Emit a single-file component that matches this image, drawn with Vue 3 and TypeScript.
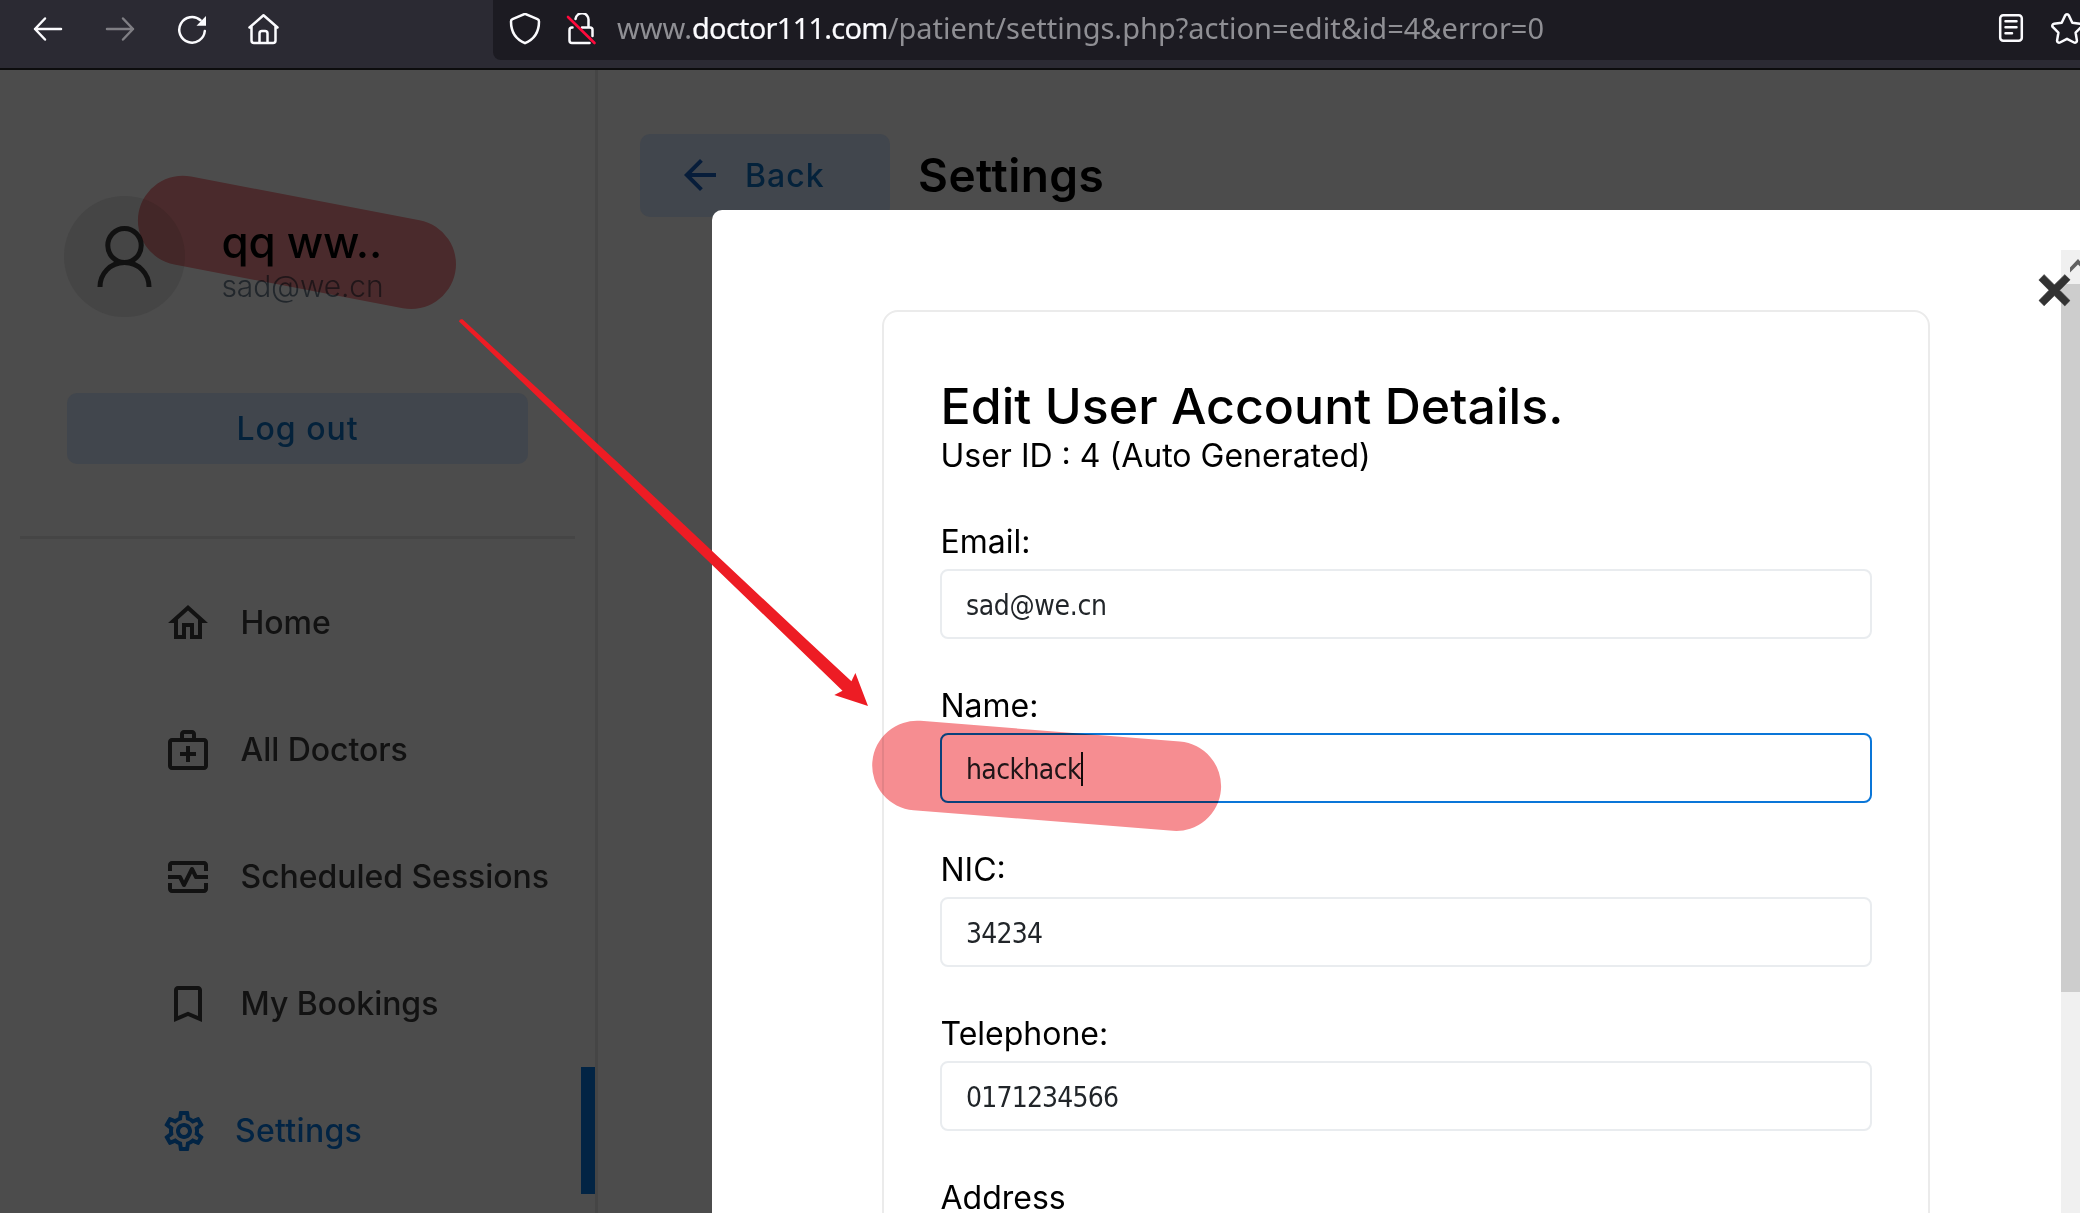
<script setup lang="ts">
interface MenuItem {
  label: string
  icon: string
  active?: boolean
}

interface Field {
  label: string
  value: string
  kind?: 'email' | 'name' | 'number'
  focused?: boolean
}

const menu: MenuItem[] = [
  {
    label: 'Home',
    icon: 'M12 5.69l5 4.5V18h-2v-6H9v6H7v-7.81l5-4.5M12 3L2 12h3v8h6v-6h2v6h6v-8h3L12 3z',
  },
  {
    label: 'All Doctors',
    icon: 'M20 6h-4V4c0-1.1-.9-2-2-2h-4c-1.1 0-2 .9-2 2v2H4c-1.1 0-2 .9-2 2v12c0 1.1.9 2 2 2h16c1.1 0 2-.9 2-2V8c0-1.1-.9-2-2-2zM10 4h4v2h-4V4zm10 16H4V8h16v12zM11 10h2v3h3v2h-3v3h-2v-3H8v-2h3z',
  },
  {
    label: 'Scheduled Sessions',
    icon: 'M20 4H4c-1.1 0-2 .9-2 2v3h2V6h16v3h2V6c0-1.1-.9-2-2-2zM20 18H4v-3H2v3c0 1.1.9 2 2 2h16c1.1 0 2-.9 2-2v-3h-2v3zM14.89 7.55c-.34-.68-1.45-.68-1.79 0L10 13.76l-1.11-2.21C8.72 11.21 8.38 11 8 11H2v2h5.38l1.72 3.45c.18.34.52.55.9.55s.72-.21.89-.55L14 10.24l1.11 2.21c.17.34.51.55.89.55h6v-2h-5.38l-1.73-3.45z',
  },
  {
    label: 'My Bookings',
    icon: 'M17 3H7c-1.1 0-2 .9-2 2v16l7-3 7 3V5c0-1.1-.9-2-2-2zm0 15l-5-2.18L7 18V5h10v13z',
  },
  {
    label: 'Settings',
    active: true,
    icon: 'M19.43 12.98c.04-.32.07-.64.07-.98 0-.34-.03-.66-.07-.98l2.11-1.65c.19-.15.24-.42.12-.64l-2-3.46c-.09-.16-.26-.25-.44-.25-.06 0-.12.01-.17.03l-2.49 1c-.52-.4-1.08-.73-1.69-.98l-.38-2.65C14.46 2.18 14.25 2 14 2h-4c-.25 0-.46.18-.49.42l-.38 2.65c-.61.25-1.17.59-1.69.98l-2.49-1c-.06-.02-.12-.03-.18-.03-.17 0-.34.09-.43.25l-2 3.46c-.13.22-.07.49.12.64l2.11 1.65c-.04.32-.07.65-.07.98 0 .33.03.66.07.98l-2.11 1.65c-.19.15-.24.42-.12.64l2 3.46c.09.16.26.25.44.25.06 0 .12-.01.17-.03l2.49-1c.52.4 1.08.73 1.69.98l.38 2.65c.03.24.24.42.49.42h4c.25 0 .46-.18.49-.42l.38-2.65c.61-.25 1.17-.59 1.69-.98l2.49 1c.06.02.12.03.18.03.17 0 .34-.09.43-.25l2-3.46c.12-.22.07-.49-.12-.64l-2.11-1.65zm-1.98-1.71c.04.31.05.52.05.73 0 .21-.02.43-.05.73l-.14 1.13.89.7 1.08.84-.7 1.21-1.27-.51-1.04-.42-.9.68c-.43.32-.84.56-1.25.73l-1.06.43-.16 1.13-.2 1.35h-1.4l-.19-1.35-.16-1.13-1.06-.43c-.43-.18-.83-.41-1.23-.71l-.91-.7-1.06.43-1.27.51-.7-1.21 1.08-.84.89-.7-.14-1.13c-.03-.31-.05-.54-.05-.74s.02-.43.05-.73l.14-1.13-.89-.7-1.08-.84.7-1.21 1.27.51 1.04.42.9-.68c.43-.32.84-.56 1.25-.73l1.06-.43.16-1.13.2-1.35h1.39l.19 1.35.16 1.13 1.06.43c.43.18.83.41 1.23.71l.91.7 1.06-.43 1.27-.51.7 1.21-1.07.85-.89.7.14 1.13zM12 8c-2.21 0-4 1.79-4 4s1.79 4 4 4 4-1.79 4-4-1.79-4-4-4zm0 6c-1.1 0-2-.9-2-2s.9-2 2-2 2 .9 2 2-.9 2-2 2z',
  },
]

const fields: Field[] = [
  { label: 'Email:', value: 'sad@we.cn', kind: 'email' },
  { label: 'Name:', value: 'hackhack', kind: 'name', focused: true },
  { label: 'NIC:', value: '34234', kind: 'number' },
  { label: 'Telephone:', value: '0171234566', kind: 'number' },
  { label: 'Address', value: '' },
]
</script>

<template>
  <div class="window">
    <header class="toolbar">
      <nav class="nav-buttons">
        <svg class="tool-icon" viewBox="0 0 32 32"><path d="M29 16H3M13 5.500L3 16l10 10.500" /></svg>
        <svg class="tool-icon dim" viewBox="0 0 32 32"><path d="M3 16h26M19 5.500L29 16 19 26.500" /></svg>
        <svg class="tool-icon" viewBox="0 0 32 32">
          <path d="M28.800 18A12.800 12.800 0 1 1 24.500 7.200" />
          <path class="solid" d="M30 3v9.800h-9.500z" />
        </svg>
        <svg class="tool-icon" viewBox="0 0 32 32">
          <path d="M1.500 14.500L15.500 2.200l14 12.300M3.500 13v14.500a2.500 2.500 0 0 0 2.500 2.500h19a2.500 2.500 0 0 0 2.500-2.500V13M11.500 30V20.500a2.500 2.500 0 0 1 2.500-2.500h3a2.500 2.500 0 0 1 2.500 2.500V30" />
        </svg>
      </nav>
      <div class="address-bar">
        <svg class="tool-icon" viewBox="0 0 32 32">
          <path d="M16 .800L28.500 6.200a2.500 2.500 0 0 1 1.500 2.400C30 19 25 26.500 16 30.200 7 26.500 2 19 2 8.600a2.500 2.500 0 0 1 1.500-2.400z" />
        </svg>
        <svg class="tool-icon lock" viewBox="0 0 32 32">
          <path d="M10.500 6a6.500 6.500 0 0 1 13 1.500V14M7.500 14.500H7a2.500 2.500 0 0 0-2.500 2.500v10.500A2.500 2.500 0 0 0 7 30h17.500M17 14.500h8a2.500 2.500 0 0 1 2.500 2.500v6" />
          <path class="slash" d="M3 4L29.500 30" />
        </svg>
        <span class="url"><span class="url-sub">www.</span><span class="url-domain">doctor111.com</span><span class="url-path">/patient/settings.php?action=edit&amp;id=4&amp;error=0</span></span>
        <svg class="tool-icon reader" viewBox="0 0 32 32">
          <rect x="5.200" y="2.200" width="21.600" height="25.600" rx="3" />
          <path d="M10.500 8.200h11M10.500 14.200h11M10.500 20.200h6.500" />
        </svg>
        <svg class="tool-icon" viewBox="0 0 32 32">
          <path d="M14.200 2.400a2 2 0 0 1 3.600 0l3.500 7.300 7.700 1.100a2 2 0 0 1 1.100 3.400l-5.500 5.500 1.300 7.700a2 2 0 0 1-2.900 2.100L16 25.800l-7 3.700a2 2 0 0 1-2.900-2.100l1.300-7.700-5.500-5.500A2 2 0 0 1 3 10.800l7.700-1.100z" />
        </svg>
      </div>
    </header>

    <div class="page">
      <aside class="sidebar">
        <div class="profile">
          <div class="avatar">
            <svg viewBox="0 0 121 121">
              <ellipse cx="60.500" cy="49.500" rx="16.700" ry="17" />
              <path d="M36 91C36 78 46 66.500 60.500 66.500S85 78 85 91" />
            </svg>
          </div>
          <div class="identity">
            <div class="user-name">qq ww..</div>
            <div class="user-email">sad@we.cn</div>
          </div>
        </div>
        <button class="logout">Log out</button>
        <div class="divider"></div>
        <ul class="menu">
          <li v-for="item in menu" :key="item.label" :class="['menu-item', { active: item.active }]">
            <svg viewBox="0 0 24 24"><path :d="item.icon" fill-rule="evenodd" /></svg>
            <span>{{ item.label }}</span>
          </li>
        </ul>
      </aside>
      <main class="content">
        <button class="back">
          <svg viewBox="0 0 24 24"><path d="M20 11H7.830l5.590-5.590L12 4l-8 8 8 8 1.410-1.410L7.830 13H20v-2z" /></svg>
          <span>Back</span>
        </button>
        <h1>Settings</h1>
      </main>
    </div>

    <section class="modal">
      <div class="card">
        <h2>Edit User Account Details.</h2>
        <p class="user-id">User ID : 4 (Auto Generated)</p>
        <form>
          <div v-for="field in fields" :key="field.label" class="field">
            <label>{{ field.label }}</label>
            <div :class="['input', field.kind, { focused: field.focused }]">
              <span>{{ field.value }}</span><i v-if="field.focused" class="caret"></i>
            </div>
          </div>
        </form>
      </div>
      <div class="scrollbar">
        <div class="scroll-up">
          <svg viewBox="0 0 34 34"><path d="M9 22.500v-5l8-8.500 8 8.500v5l-8-8z" /></svg>
        </div>
        <div class="thumb"></div>
      </div>
      <span class="close">×</span>
    </section>

    <svg class="markup highlight" viewBox="0 0 2080 1213">
      <path d="M182.700 220.500L411.200 264.200M917 765.500L1176.300 786.200" />
    </svg>
    <svg class="markup" viewBox="0 0 2080 1213">
      <path class="arrow" d="M459 321.500Q459.500 318.500 462.500 319.300L620 464.500 807 640 851.400 681.300 855.400 673 868 706 834.300 695 842.500 690.700 790 640 620 476z" />
    </svg>
  </div>
</template>

<style>
body {
  margin: 0;
  background: #4c4c4c;
  overflow: hidden;
}
</style>

<style scoped>
.window {
  position: relative;
  width: 2080px;
  height: 1213px;
  overflow: hidden;
  background: #4c4c4c;
  font-family: Inter, sans-serif;
  isolation: isolate;
}

.toolbar {
  display: flex;
  box-sizing: border-box;
  height: 70px;
  background: #2b2a33;
  border-bottom: 2px solid #0c0c0d;
}

.nav-buttons {
  display: flex;
  gap: 40px;
  box-sizing: border-box;
  width: 493px;
  padding: 13px 0 0 32px;
}

.tool-icon {
  flex: none;
  width: 32px;
  height: 32px;
  fill: none;
  stroke: #fbfbfe;
  stroke-width: 2.5;
  stroke-linecap: round;
  stroke-linejoin: round;
}

.tool-icon.dim {
  stroke: #7f7e84;
}

.tool-icon .solid {
  fill: #fbfbfe;
  stroke: none;
}

.tool-icon .slash {
  stroke: #ff0a3c;
  stroke-width: 2.6;
}

.address-bar {
  display: flex;
  flex: 1;
  box-sizing: border-box;
  height: 60px;
  min-width: 0;
  padding: 13px 0 0 16px;
  background: #1c1b22;
  border-radius: 0 0 0 8px;
}

.lock {
  margin-left: 24px;
}

.url {
  flex: none;
  width: 1378px;
  margin: -5px 0 0 20px;
  font: 29px/40px "Noto Sans", sans-serif;
  color: #8f8f94;
  white-space: nowrap;
}

.url-domain {
  color: #fbfbfe;
  letter-spacing: -0.75px;
  -webkit-text-stroke: 0.2px #fbfbfe;
}

.reader {
  margin-right: 24px;
}

.page {
  display: flex;
  height: 1143px;
}

.sidebar {
  flex: none;
  box-sizing: border-box;
  width: 598px;
  border-right: 3px solid #454545;
}

.profile {
  display: flex;
  height: 121px;
  padding: 126px 0 0 64px;
}

.avatar {
  width: 121px;
  height: 121px;
  border-radius: 50%;
  background: #454545;
}

.avatar svg {
  display: block;
  fill: none;
  stroke: #111;
  stroke-width: 5;
}

.identity {
  padding: 20px 0 0 36.500px;
}

.user-name {
  font-size: 44px;
  font-weight: 500;
  line-height: 52px;
  letter-spacing: -0.3px;
  color: #000;
}

.user-email {
  font-size: 30px;
  font-weight: 300;
  line-height: 36px;
  letter-spacing: -0.15px;
  color: #22272c;
}

button {
  border: 0;
  padding: 0;
  border-radius: 10px;
  background: #41464d;
  color: #04223b;
  font: 500 32px/40px Inter, sans-serif;
  letter-spacing: 1px;
}

.logout {
  display: block;
  width: 461px;
  height: 71px;
  margin: 76px 0 0 67px;
}

.divider {
  width: 555px;
  height: 3px;
  margin: 72px 0 20px 20px;
  background: #454545;
}

.menu {
  margin: 0;
  padding: 0;
  list-style: none;
}

.menu-item {
  display: flex;
  align-items: center;
  box-sizing: border-box;
  height: 127px;
  padding-left: 164px;
  font-size: 32px;
  font-weight: 500;
  line-height: 40px;
  letter-spacing: -0.04px;
  color: #121212;
}

.menu-item svg {
  width: 48px;
  height: 48px;
  margin-right: 28.500px;
  fill: currentColor;
}

.menu-item.active {
  padding-left: 160px;
  border-right: 14px solid #022444;
  letter-spacing: 0.3px;
  color: #022444;
}

.menu-item.active svg {
  margin-right: 27px;
}

.content {
  display: flex;
  align-items: flex-start;
  padding: 64px 0 0 42px;
}

.back {
  display: flex;
  align-items: center;
  width: 250px;
  height: 83px;
  padding-left: 36px;
}

.back svg {
  width: 48px;
  height: 48px;
  margin: -2px 21px 0 0;
  fill: #071d3a;
}

h1 {
  margin: 13px 0 0 28px;
  font-size: 46px;
  font-weight: 600;
  line-height: 56px;
  letter-spacing: 0.5px;
  color: #000;
}

.modal {
  position: absolute;
  left: 712px;
  top: 210px;
  display: flex;
  justify-content: space-between;
  box-sizing: border-box;
  width: 1383px;
  height: 1100px;
  padding: 0 0 0 170px;
  border-radius: 10px;
  background: #fff;
}

.card {
  box-sizing: border-box;
  width: 1048px;
  height: 1200px;
  margin-top: 100px;
  padding: 64px 56px 0;
  border: 2px solid #ebebeb;
  border-radius: 16px;
}

h2 {
  margin: 0;
  font-size: 50px;
  font-weight: 500;
  line-height: 60px;
  letter-spacing: 0.04px;
  text-indent: 0.500px;
  color: #000;
  white-space: nowrap;
}

.user-id {
  margin: 0 0 46px;
  font-size: 32px;
  line-height: 40px;
  text-indent: 0.500px;
}

.field {
  height: 164px;
}

.field label {
  display: block;
  height: 47px;
  font-size: 32px;
  line-height: 40px;
  text-indent: 0.500px;
}

.input {
  display: flex;
  align-items: center;
  box-sizing: border-box;
  height: 70px;
  padding: 3px 0 0 24px;
  border: 2px solid #e9ecef;
  border-radius: 8px;
  font: 28px/34px "DejaVu Sans Condensed", "DejaVu Sans", sans-serif;
  font-stretch: condensed;
  color: #212529;
}

.input.number {
  letter-spacing: -0.8px;
}

.input.email {
  letter-spacing: -0.35px;
}

.input.name {
  letter-spacing: -0.6px;
}

.input.focused {
  border-color: #0a76d8;
}

.caret {
  width: 2px;
  height: 34px;
  margin-top: -2px;
  background: #111;
}

.scrollbar {
  width: 34px;
  margin-top: 40px;
  background: #f0f0f0;
}

.scroll-up {
  height: 34px;
}

.scroll-up svg {
  display: block;
  fill: #606060;
}

.thumb {
  height: 708px;
  background: #cdcdcd;
}

.close {
  position: absolute;
  left: 1313px;
  top: 38px;
  width: 59px;
  text-align: center;
  font: 700 70px/80px "Open Sans", sans-serif;
  -webkit-text-stroke: 0.5px #333;
  color: #333;
}

.markup {
  position: absolute;
  inset: 0;
  width: 2080px;
  height: 1213px;
  pointer-events: none;
}

.highlight {
  fill: none;
  stroke: #f68d91;
  stroke-width: 89.600;
  stroke-linecap: round;
  mix-blend-mode: multiply;
}

.arrow {
  fill: #ed1c24;
}
</style>
